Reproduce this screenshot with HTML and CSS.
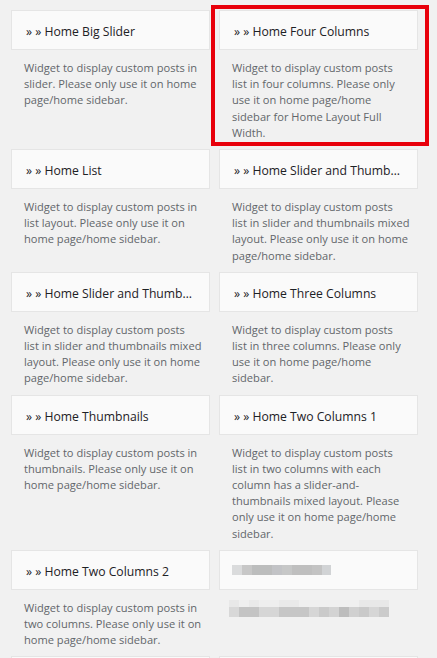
FILE: index.html
```html
<!DOCTYPE html>
<html lang="en">
<head>
    <meta charset="UTF-8">
    <meta name="viewport" content="width=device-width, initial-scale=1.0">
    <title>Available Widgets</title>
    <link rel="stylesheet" href="styles.css">
</head>
<body>

    <div class="widget-list">

        <div class="widget">
            <div class="widget-top">&raquo; &raquo; Home Big Slider</div>
            <p class="widget-description">Widget to display custom posts in<br>slider. Please only use it on home<br>page/home sidebar.</p>
        </div>

        <div class="widget highlighted">
            <div class="widget-top">&raquo; &raquo; Home Four Columns</div>
            <p class="widget-description">Widget to display custom posts<br>list in four columns. Please only<br>use it on home page/home<br>sidebar for Home Layout Full<br>Width.</p>
            <div class="highlight"></div>
        </div>

        <div class="widget">
            <div class="widget-top">&raquo; &raquo; Home List</div>
            <p class="widget-description">Widget to display custom posts in<br>list layout. Please only use it on<br>home page/home sidebar.</p>
        </div>

        <div class="widget">
            <div class="widget-top">&raquo; &raquo; Home Slider and Thumbnails</div>
            <p class="widget-description">Widget to display custom posts<br>list in slider and thumbnails mixed<br>layout. Please only use it on home<br>page/home sidebar.</p>
        </div>

        <div class="widget">
            <div class="widget-top">&raquo; &raquo; Home Slider and Thumbnails</div>
            <p class="widget-description">Widget to display custom posts<br>list in slider and thumbnails mixed<br>layout. Please only use it on home<br>page/home sidebar.</p>
        </div>

        <div class="widget">
            <div class="widget-top">&raquo; &raquo; Home Three Columns</div>
            <p class="widget-description">Widget to display custom posts<br>list in three columns. Please only<br>use it on home page/home<br>sidebar.</p>
        </div>

        <div class="widget">
            <div class="widget-top">&raquo; &raquo; Home Thumbnails</div>
            <p class="widget-description">Widget to display custom posts in<br>thumbnails. Please only use it on<br>home page/home sidebar.</p>
        </div>

        <div class="widget">
            <div class="widget-top">&raquo; &raquo; Home Two Columns 1</div>
            <p class="widget-description">Widget to display custom posts<br>list in two columns with each<br>column has a slider-and-<br>thumbnails mixed layout. Please<br>only use it on home page/home<br>sidebar.</p>
        </div>

        <div class="widget">
            <div class="widget-top">&raquo; &raquo; Home Two Columns 2</div>
            <p class="widget-description">Widget to display custom posts in<br>two columns. Please only use it on<br>home page/home sidebar.</p>
        </div>

        <!-- Name und Beschreibung verpixelt -->
        <div class="widget">
            <div class="widget-top"><span class="blur blur-title"></span></div>
            <div class="widget-description">
                <span class="blur blur-desc-top"></span>
                <span class="blur blur-desc"></span>
            </div>
        </div>

        <div class="widget">
            <div class="widget-top"></div>
        </div>
        <div class="widget">
            <div class="widget-top"></div>
        </div>

    </div>

</body>
</html>
```

FILE: styles.css
```css
body {
    margin: 0;
    background-color: #f1f1f1;
    font-family: "Open Sans", "Noto Sans", sans-serif;
    overflow: hidden;
    height: 658px;
}
.widget-list {
    display: grid;
    grid-template-columns: 199px 199px;
    column-gap: 9px;
    row-gap: 8px;
    padding: 10px 0 0 11px;
}
.widget {
    position: relative;
}
.widget-top {
    height: 35px;
    line-height: 35px;
    padding: 3px 15px 0 14px;
    background-color: #fafafa;
    border: 1px solid #e5e5e5;
    font-size: 12.2px;
    color: #1d2125;
    white-space: nowrap;
    overflow: hidden;
    text-overflow: ellipsis;
}
.widget-description {
    margin: 10px 0 0;
    padding: 0 2px 0 13px;
    font-size: 11.1px;
    line-height: 16.2px;
    color: #62666a;
    white-space: nowrap;
}
.highlight {
    position: absolute;
    left: -8px;
    top: -5px;
    width: 210px;
    height: 133px;
    border: 4px solid #e8000b;
}
.blur {
    display: block;
}
.blur-title {
    margin: 11px 0 0 -2px;
    width: 99px;
    height: 10px;
    background: linear-gradient(to right,
        #dadbdc 0 10px, #c7c7c7 10px 20px, #bcbdbd 20px 40px, #c2c3c6 40px 50px,
        #c6c7c7 50px 60px, #bfbfbf 60px 80px, #c3c3c3 80px 90px, #d1d3d5 90px);
}
.blur-desc-top {
    width: 160px;
    height: 7px;
    margin-left: -3px;
    background: linear-gradient(to right,
        #e8e8e8 0 10px, #efefef 10px 20px, #e9e9e9 20px 30px, #eeeeee 30px 50px,
        #e9e9e9 50px 70px, #efefef 70px 130px, #e8e8e8 130px);
}
.blur-desc {
    width: 160px;
    height: 10px;
    margin-left: -3px;
    background: linear-gradient(to right,
        #d8d8d8 0 10px, #c4c4c4 10px 30px, #d6d6d6 30px 50px, #c6c6c6 50px 80px,
        #d6d6d6 80px 90px, #cacaca 90px 100px, #d3d3d3 100px 110px, #bdbdbd 110px 120px,
        #d0d0d0 120px 130px, #c9c9c9 130px 140px, #d6d6d6 140px 150px, #cbcbcb 150px);
}
```
